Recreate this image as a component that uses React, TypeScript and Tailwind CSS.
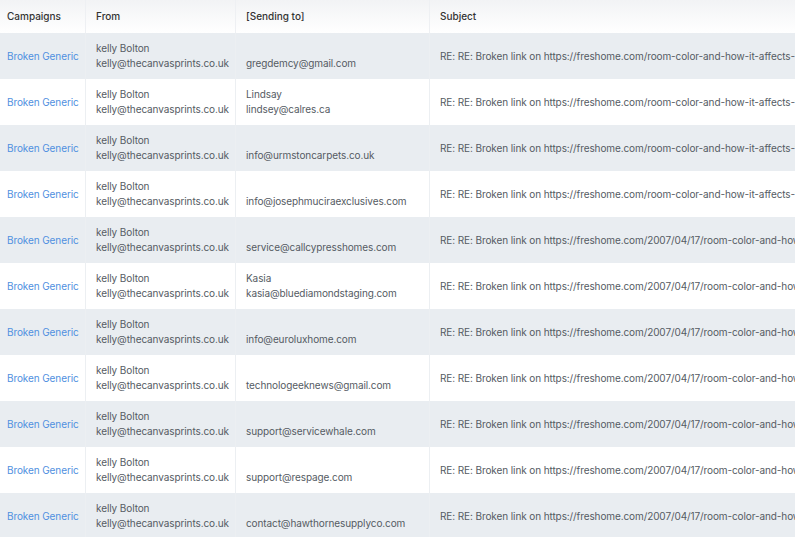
const rows = [
  { to: "", toEmail: "gregdemcy@gmail.com", subject: "RE: RE: Broken link on https://freshome.com/room-color-and-how-it-affects-your-mood-and-productivity/" },
  { to: "Lindsay", toEmail: "lindsey@calres.ca", subject: "RE: RE: Broken link on https://freshome.com/room-color-and-how-it-affects-your-mood-and-productivity/" },
  { to: "", toEmail: "info@urmstoncarpets.co.uk", subject: "RE: RE: Broken link on https://freshome.com/room-color-and-how-it-affects-your-mood-and-productivity/" },
  { to: "", toEmail: "info@josephmuciraexclusives.com", subject: "RE: RE: Broken link on https://freshome.com/room-color-and-how-it-affects-your-mood-and-productivity/" },
  { to: "", toEmail: "service@callcypresshomes.com", subject: "RE: RE: Broken link on https://freshome.com/2007/04/17/room-color-and-how-it-affects-your-mood/" },
  { to: "Kasia", toEmail: "kasia@bluediamondstaging.com", subject: "RE: RE: Broken link on https://freshome.com/2007/04/17/room-color-and-how-it-affects-your-mood/" },
  { to: "", toEmail: "info@euroluxhome.com", subject: "RE: RE: Broken link on https://freshome.com/2007/04/17/room-color-and-how-it-affects-your-mood/" },
  { to: "", toEmail: "technologeeknews@gmail.com", subject: "RE: RE: Broken link on https://freshome.com/2007/04/17/room-color-and-how-it-affects-your-mood/" },
  { to: "", toEmail: "support@servicewhale.com", subject: "RE: RE: Broken link on https://freshome.com/2007/04/17/room-color-and-how-it-affects-your-mood/" },
  { to: "", toEmail: "support@respage.com", subject: "RE: RE: Broken link on https://freshome.com/2007/04/17/room-color-and-how-it-affects-your-mood/" },
  { to: "", toEmail: "contact@hawthornesupplyco.com", subject: "RE: RE: Broken link on https://freshome.com/2007/04/17/room-color-and-how-it-affects-your-mood/" },
];

export default function App() {
  return (
    <div className="w-[795px] h-[537px] overflow-hidden bg-white font-['Inter',sans-serif] text-[10px] tracking-[-0.1px] text-[#555b63]">
      <div className="w-[1100px]">
        {/* header */}
        <div className="flex h-[33px] bg-gradient-to-b from-[#f2f3f5] to-white text-[#333] font-medium tracking-normal">
          <div className="w-[86px] shrink-0 pl-[7px] pt-[9px] border-r border-[#eef0f3]">Campaigns</div>
          <div className="w-[150px] shrink-0 pl-[10px] pt-[9px] border-r border-[#eef0f3]">From</div>
          <div className="w-[194px] shrink-0 pl-[10px] pt-[9px] border-r border-[#eef0f3]">[Sending to]</div>
          <div className="flex-1 pl-[10px] pt-[9px]">Subject</div>
        </div>
        {rows.map((r, i) => (
          <div key={i} className={`flex h-[46px] leading-[15px] whitespace-nowrap ${i % 2 === 0 ? "bg-[#e9edf1]" : "bg-white"}`}>
            <div className="w-[86px] shrink-0 pl-[7px] flex items-center border-r border-[#eceff2] text-[#4f90e0]">Broken Generic</div>
            <div className="w-[150px] shrink-0 pl-[10px] flex flex-col justify-center border-r border-[#eceff2]">
              <div>kelly Bolton</div>
              <div>kelly@thecanvasprints.co.uk</div>
            </div>
            <div className="w-[194px] shrink-0 pl-[10px] flex flex-col justify-center border-r border-[#eceff2]">
              <div className="h-[15px]">{r.to}</div>
              <div>{r.toEmail}</div>
            </div>
            <div className="flex-1 pl-[10px] flex items-center">{r.subject}</div>
          </div>
        ))}
      </div>
    </div>
  );
}
